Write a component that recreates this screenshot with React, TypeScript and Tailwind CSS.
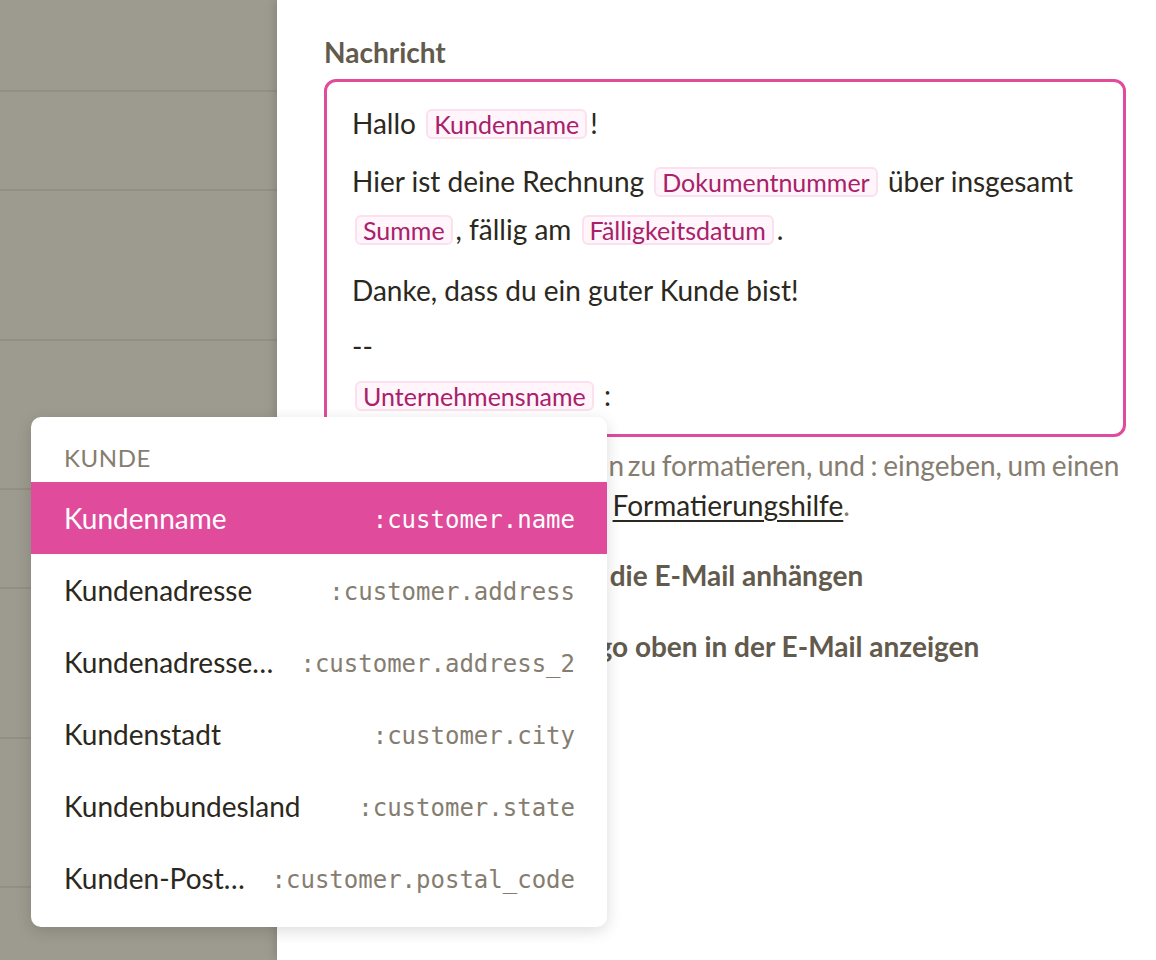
import React from 'react';

type Field = { label: string; token: string };

const fields: Field[] = [
  { label: 'Kundenname', token: ':customer.name' },
  { label: 'Kundenadresse', token: ':customer.address' },
  { label: 'Kundenadresse Zeile 2', token: ':customer.address_2' },
  { label: 'Kundenstadt', token: ':customer.city' },
  { label: 'Kundenbundesland', token: ':customer.state' },
  { label: 'Kunden-Postleitzahl', token: ':customer.postal_code' },
];

// heights of the list rows behind the dimmed sidebar
const sidebarRows = [92, 99, 150, 149, 99, 150, 149];

const Chip: React.FC<{ children: React.ReactNode }> = ({ children }) => (
  <span className="mx-[3px] inline-block rounded-[6px] border-2 border-[#fbe1ee] bg-[#fff5fa] px-[6px] text-[25px] leading-[26px] text-[#a8216a]">
    {children}
  </span>
);

const Checkbox: React.FC<{ children: React.ReactNode }> = ({ children }) => (
  <label className="flex items-center gap-5 whitespace-nowrap text-[28px] font-bold leading-[34px] text-[#625a4d]">
    <span className="h-[22px] w-[22px] shrink-0 rounded-[4px] border-2 border-[#c9c4b9]" />
    <span>{children}</span>
  </label>
);

const PlaceholderMenu: React.FC = () => (
  <div className="absolute left-[31px] top-[417px] w-[576px] rounded-[10px] bg-white pb-[13px] shadow-[0_4px_16px_rgba(0,0,0,0.14)]">
    <div className="flex h-[65px] items-center px-[33px] pt-[17px] text-[24px] tracking-wide text-[#857d70]">
      KUNDE
    </div>
    {fields.map((f, i) => (
      <div
        key={f.token}
        className={
          i === 0
            ? 'flex h-[72px] items-center gap-6 bg-[#e14b9b] pl-[33px] pr-[32px] text-white'
            : 'flex h-[72px] items-center gap-6 pl-[33px] pr-[32px] text-[#2b2820]'
        }
      >
        <span className="min-w-0 flex-1 truncate text-[28px]">{f.label}</span>
        <span
          className={
            i === 0
              ? 'shrink-0 pt-[3px] font-[DejaVu_Sans_Mono,monospace] text-[24px] text-white'
              : 'shrink-0 pt-[3px] font-[DejaVu_Sans_Mono,monospace] text-[24px] text-[#857d70]'
          }
        >
          {f.token}
        </span>
      </div>
    ))}
  </div>
);

export default function App() {
  return (
    <div className="relative flex h-[960px] w-full overflow-hidden bg-white font-[Lato,'Liberation_Sans',sans-serif] text-[#2b2820]">
      <aside className="w-[277px] shrink-0 bg-[#9d9a8f]">
        {sidebarRows.map((h, i) => (
          <div key={i} className="border-b-2 border-[#948f84]" style={{ height: h }} />
        ))}
      </aside>

      <main className="min-w-0 flex-1 pl-[47px] pr-[30px] pt-[35px] shadow-[-3px_0_8px_rgba(0,0,0,0.12)]">
        <label className="block text-[28px] font-bold leading-[34px] text-[#625a4d]">Nachricht</label>

        <div className="mt-[10px] h-[358px] rounded-[12px] border-[3px] border-[#e14b9b] px-[25px] pt-[17px] text-[28px]">
          <p className="leading-[48px]">
            Hallo <Chip>Kundenname</Chip>!
          </p>
          <p className="mt-[10px] leading-[48px]">
            Hier ist deine Rechnung <Chip>Dokumentnummer</Chip> über insgesamt
            <br />
            <Chip>Summe</Chip>, fällig am <Chip>Fälligkeitsdatum</Chip>.
          </p>
          <p className="mt-[13px] leading-[48px]">Danke, dass du ein guter Kunde bist!</p>
          <p className="mt-[8px] leading-[49px]">
            --
            <br />
            <Chip>Unternehmensname</Chip> :
          </p>
        </div>

        <p className="mt-[8px] whitespace-nowrap text-[28px] leading-[40px] text-[#857d70]">
          <span className="[word-spacing:-3.5px]">Nutze Markdown, um ihn </span>
          <span className="[word-spacing:-1.5px]">zu formatieren, und : eingeben, um einen</span>
          <br />
          <span className="[word-spacing:-1.5px]">Wert einzufügen. Siehe </span>
          <a className="text-[#2b2820] underline underline-offset-4">Formatierungshilfe</a>.
        </p>

        <div className="mt-[33px] flex flex-col gap-[37px]">
          <Checkbox>Rechnungs-PDF an die E-Mail anhängen</Checkbox>
          <Checkbox>
            <span className="tracking-[-1.9px]">Das Unternehmens</span>logo oben in der E-Mail anzeigen
          </Checkbox>
        </div>
      </main>

      <PlaceholderMenu />
    </div>
  );
}
